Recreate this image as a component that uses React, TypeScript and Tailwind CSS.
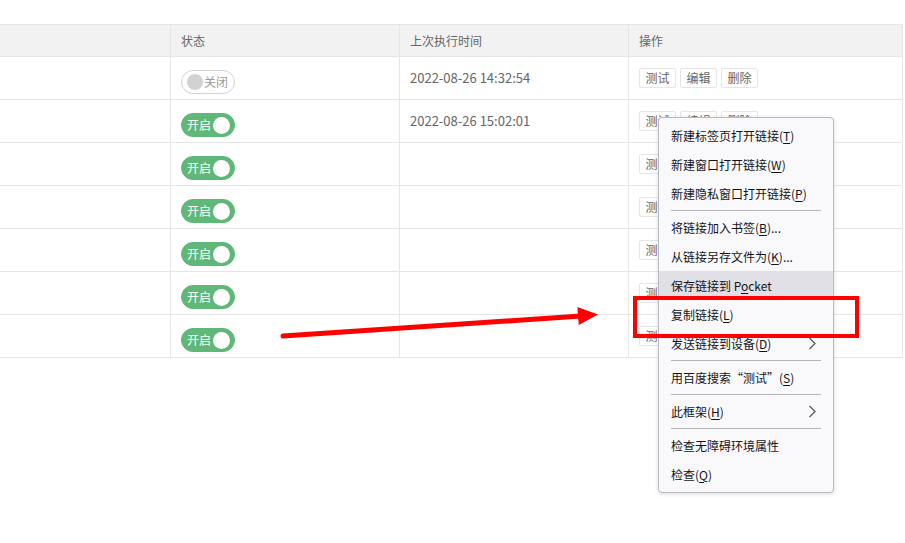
import React from 'react';

const rows = [
  { on: false, time: '2022-08-26 14:32:54' },
  { on: true, time: '2022-08-26 15:02:01' },
  { on: true, time: '' },
  { on: true, time: '' },
  { on: true, time: '' },
  { on: true, time: '' },
  { on: true, time: '' },
];

const Toggle: React.FC<{ on: boolean }> = ({ on }) =>
  on ? (
    <div className="mt-[8px] flex h-[24px] w-[54px] items-center rounded-full border border-[#5fb878] bg-[#5fb878] pl-[5px] pr-[4px] text-[12px] text-white">
      <span className="flex-1 leading-none">开启</span>
      <span className="h-[17px] w-[17px] rounded-full bg-white" />
    </div>
  ) : (
    <div className="mt-[8px] flex h-[24px] w-[54px] items-center rounded-full border border-[#d2d2d2] bg-white pl-[5px] pr-[5px] text-[12px] text-[#999]">
      <span className="h-[16px] w-[16px] rounded-full bg-[#d2d2d2]" />
      <span className="ml-[1px] leading-none">关闭</span>
    </div>
  );

const OpButton: React.FC<{ label: string }> = ({ label }) => (
  <span className="flex h-[20px] w-[37px] items-center justify-center rounded-[2px] border border-[#e6e6e6] bg-white text-[12px] text-[#666]">
    {label}
  </span>
);

type Item = { text: React.ReactNode; sub?: boolean; hover?: boolean } | 'sep';

const Key: React.FC<{ k: string }> = ({ k }) => (
  <>
    (<span className="underline underline-offset-2">{k}</span>)
  </>
);

const menu: Item[] = [
  { text: <>新建标签页打开链接<Key k="T" /></> },
  { text: <>新建窗口打开链接<Key k="W" /></> },
  { text: <>新建隐私窗口打开链接<Key k="P" /></> },
  'sep',
  { text: <>将链接加入书签<Key k="B" />...</> },
  { text: <>从链接另存文件为<Key k="K" />...</> },
  {
    text: (
      <>
        保存链接到 P<span className="underline underline-offset-2">o</span>cket
      </>
    ),
    hover: true,
  },
  { text: <>复制链接<Key k="L" /></> },
  { text: <>发送链接到设备<Key k="D" /></>, sub: true },
  'sep',
  { text: <>用百度搜索“测试”<Key k="S" /></> },
  'sep',
  { text: <>此框架<Key k="H" /></>, sub: true },
  'sep',
  { text: <>检查无障碍环境属性</> },
  { text: <>检查<Key k="Q" /></> },
];

const Chevron = () => (
  <svg width="8" height="13" viewBox="0 0 8 13" fill="none">
    <path d="M1.5 1l5.5 5.5-5.5 5.5" stroke="#5b5b66" strokeWidth="1.3" />
  </svg>
);

export default function App() {
  return (
    <div
      className="relative h-[543px] w-[905px] overflow-hidden bg-white"
      style={{ fontFamily: '"Noto Sans CJK SC", "Noto Sans", sans-serif' }}
    >
      {/* table */}
      <div className="mt-[24px] w-[903px] border-t border-[#e6e6e6] text-[12px] text-[#666]">
        <div className="grid h-[32px] grid-cols-[171px_229px_229px_274px] border-b border-[#e6e6e6] bg-[#f2f2f2]">
          <div className="border-r border-[#e6e6e6]" />
          <div className="flex items-center border-r border-[#e6e6e6] px-[10px]">状态</div>
          <div className="flex items-center border-r border-[#e6e6e6] px-[10px]">上次执行时间</div>
          <div className="flex items-center border-r border-[#e6e6e6] px-[10px]">操作</div>
        </div>
        {rows.map((r, i) => (
          <div
            key={i}
            className="grid h-[43px] grid-cols-[171px_229px_229px_274px] border-b border-[#e6e6e6]"
          >
            <div className="border-r border-[#e6e6e6]" />
            <div className="flex items-center border-r border-[#e6e6e6] px-[10px]">
              <Toggle on={r.on} />
            </div>
            <div className="flex items-center border-r border-[#e6e6e6] px-[10px] text-[13px]">
              {r.time}
            </div>
            <div className="flex items-center gap-[4px] border-r border-[#e6e6e6] px-[10px]">
              <OpButton label="测试" />
              <OpButton label="编辑" />
              <OpButton label="删除" />
            </div>
          </div>
        ))}
      </div>

      {/* context menu */}
      <div className="absolute left-[658px] top-[117px] w-[176px] rounded-[4px] border border-[#b9b9c0] bg-[#f9f9fb] py-[3px] text-[12px] text-[#15141a] shadow-[0_1px_4px_rgba(0,0,0,0.15)]">
        {menu.map((it, i) =>
          it === 'sep' ? (
            <div key={i} className="mx-[12px] my-[2px] h-px bg-[#b3b3b8]" />
          ) : (
            <div
              key={i}
              className={`flex h-[29px] items-center justify-between pl-[12px] pr-[17px] ${
                it.hover ? 'bg-[#e0e0e6]' : ''
              }`}
            >
              <span>{it.text}</span>
              {it.sub && <Chevron />}
            </div>
          )
        )}
      </div>

      {/* annotation */}
      <div className="absolute left-[633px] top-[296px] h-[42px] w-[226px] border-4 border-[#ff0000]" />
      <svg className="pointer-events-none absolute left-0 top-0" width="905" height="543">
        <line x1="283" y1="336" x2="581" y2="316" stroke="#ff0000" strokeWidth="5" strokeLinecap="round" />
        <polygon points="598,314.5 577.4,306.9 578.7,324.9" fill="#ff0000" />
      </svg>
    </div>
  );
}
